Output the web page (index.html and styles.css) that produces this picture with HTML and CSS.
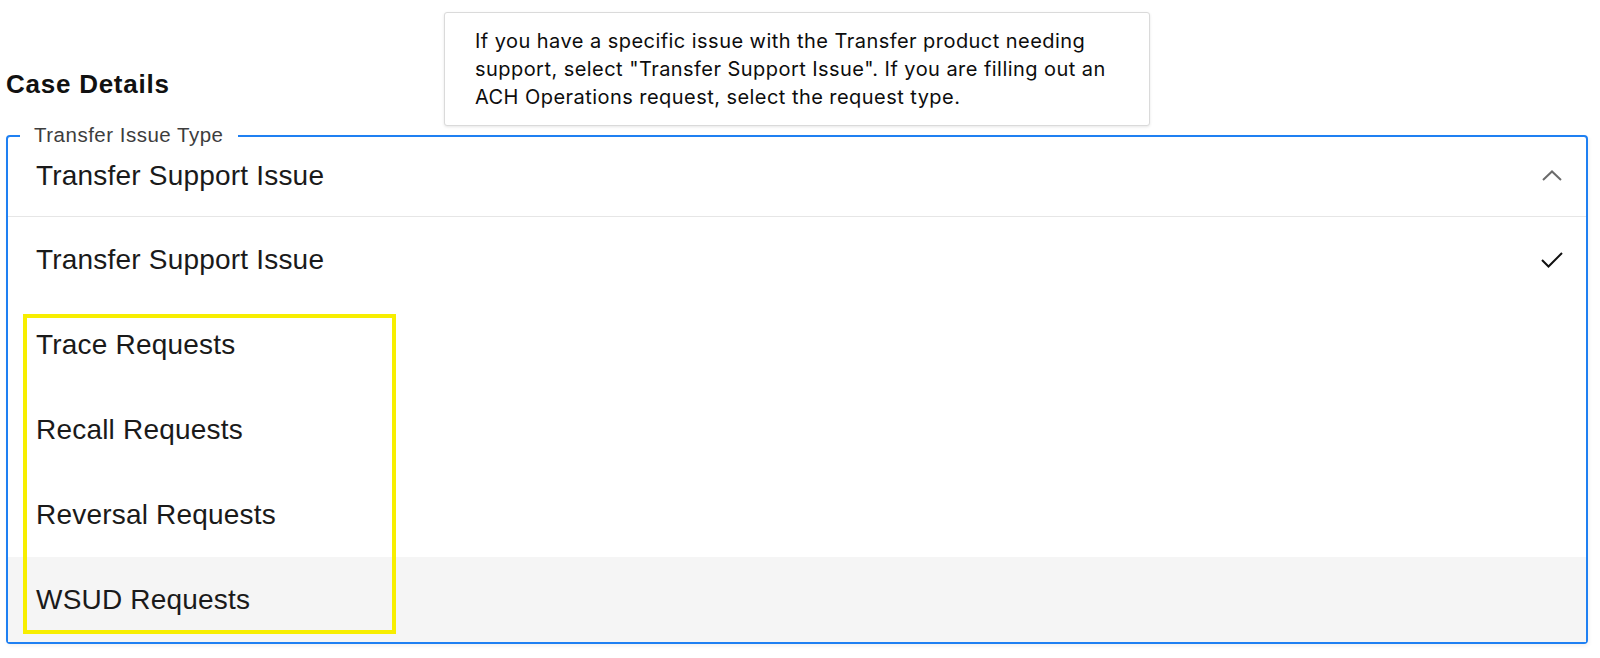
FILE: index.html
```html
<!DOCTYPE html>
<html lang="en">
<head>
<meta charset="utf-8">
<title>Case Details</title>
<link rel="stylesheet" href="styles.css">
</head>
<body>
<main class="page">
  <h2 class="heading">Case Details</h2>
  <div class="tooltip" role="tooltip">If you have a specific issue with the Transfer product needing<br>support, select "Transfer Support Issue". If you are filling out an<br>ACH Operations request, select the request type.</div>

  <div class="select">
    <span class="select-label">Transfer Issue Type</span>
    <div class="select-head">
      <span class="select-value">Transfer Support Issue</span>
      <svg class="chevron" width="20" height="11" viewBox="0 0 20 11" aria-hidden="true"><path d="M1 10 L10 1.5 L19 10" fill="none" stroke="#6b6b6b" stroke-width="2"/></svg>
    </div>
    <ul class="options">
      <li class="option selected"><span>Transfer Support Issue</span>
        <svg class="check" width="22" height="16" viewBox="0 0 22 16" aria-hidden="true"><path d="M1 8 L7.5 14.5 L21 1" fill="none" stroke="#111" stroke-width="2"/></svg>
      </li>
      <li class="option">Trace Requests</li>
      <li class="option">Recall Requests</li>
      <li class="option">Reversal Requests</li>
      <li class="option hover">WSUD Requests</li>
    </ul>
    <div class="annotation"></div>
  </div>
</main>
</body>
</html>
```
FILE: styles.css
```css
* { box-sizing: border-box; }
html, body { margin: 0; padding: 0; background: #fff; }
body {
  font-family: "Liberation Sans", Arial, Helvetica, sans-serif;
  color: #161616;
  width: 1600px;
  height: 658px;
  overflow: hidden;
}
.page {
  position: relative;
  padding: 68px 12px 0 6px;
}
.heading {
  margin: 0;
  font-size: 26px;
  line-height: 32px;
  font-weight: 700;
  letter-spacing: 0.75px;
  color: #111;
  height: 67px;
}
.tooltip {
  position: absolute;
  left: 444px;
  top: 12px;
  width: 706px;
  padding: 14px 20px 14px 30px;
  background: #fff;
  border: 1px solid #dadada;
  border-radius: 3px;
  box-shadow: 0 1px 3px rgba(0,0,0,0.10);
  font-family: Inter, "Liberation Sans", Arial, sans-serif;
  font-size: 20px;
  line-height: 28px;
  letter-spacing: 0.45px;
  color: #0d0d0d;
  z-index: 2;
}
.select {
  position: relative;
  border: 2px solid #1f80f2;
  border-radius: 4px;
  box-shadow: 1px 2px 4px rgba(0,0,0,0.06);
}
.select-label {
  position: absolute;
  left: 12px;
  top: -14px;
  padding: 0 14px 0 14px;
  background: #fff;
  font-size: 20.5px;
  line-height: 24px;
  letter-spacing: 0.5px;
  color: #3d3d3d;
}
.select-head {
  display: flex;
  align-items: center;
  justify-content: space-between;
  height: 80px;
  padding: 0 24px 2px 28px;
  border-bottom: 1px solid #e6e6e6;
}
.select-value, .option {
  font-size: 28px;
  letter-spacing: 0.2px;
  color: #1a1a1a;
}
.options {
  list-style: none;
  margin: 0;
  padding: 0;
}
.option {
  display: flex;
  align-items: center;
  justify-content: space-between;
  height: 85px;
  padding: 0 23px 0 28px;
}
.option.hover { background: #f5f5f5; }
.chevron { display: block; }
.check { display: block; }
.annotation {
  position: absolute;
  left: 15px;
  top: 177px;
  width: 373px;
  height: 320px;
  border: 4px solid #f7ee00;
  pointer-events: none;
}
```
